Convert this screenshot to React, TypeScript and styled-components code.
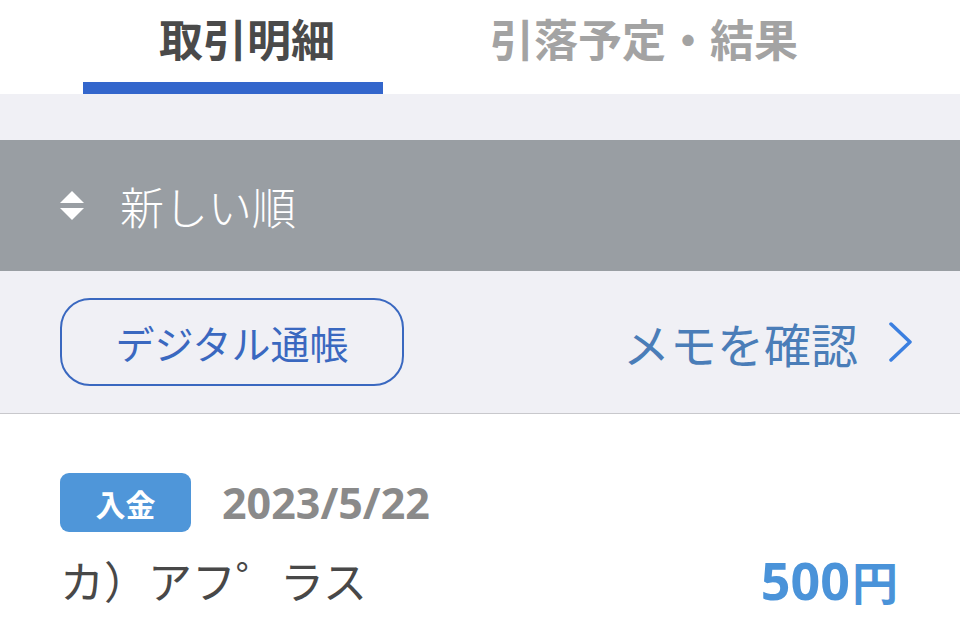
import React from "react";
import styled, { createGlobalStyle } from "styled-components";

const Global = createGlobalStyle`
  html, body { margin: 0; padding: 0; background: #ffffff; }
  body { font-family: "Noto Sans CJK JP", "Noto Sans", sans-serif; }
  * { box-sizing: border-box; }
`;

const Page = styled.div`
  width: 960px;
  height: 619px;
  overflow: hidden;
  background: #ffffff;
  display: flex;
  flex-direction: column;
`;

const TabBar = styled.div`
  height: 94px;
  display: flex;
  padding-left: 83px;
  background: #ffffff;
`;

const Tab = styled.div<{ $active?: boolean }>`
  width: ${(p) => (p.$active ? "300px" : "auto")};
  display: flex;
  align-items: center;
  justify-content: center;
  white-space: nowrap;
  padding-left: ${(p) => (p.$active ? "28px" : "0")};
  padding-bottom: ${(p) => (p.$active ? "6px" : "18px")};
  margin-left: ${(p) => (p.$active ? "0" : "107px")};
  font-size: 44px;
  font-weight: 700;
  color: ${(p) => (p.$active ? "#4a4a4a" : "#a3a3a3")};
  border-bottom: ${(p) => (p.$active ? "12px solid #3366cc" : "none")};
`;

const Spacer = styled.div`
  height: 46px;
  background: #f0f0f5;
`;

const SortBar = styled.div`
  height: 131px;
  background: #999ea3;
  display: flex;
  align-items: center;
  padding-left: 60px;
  gap: 36px;
  color: #ffffff;
  font-size: 44px;
  font-weight: 300;
`;

const ActionRow = styled.div`
  height: 143px;
  background: #f0f0f5;
  border-bottom: 1px solid #c8c8cc;
  display: flex;
  align-items: center;
  justify-content: space-between;
  padding: 0 46px 0 60px;
`;

const OutlineButton = styled.div`
  width: 344px;
  height: 88px;
  border: 2.5px solid #3a68c0;
  border-radius: 30px;
  display: flex;
  align-items: center;
  justify-content: center;
  color: #3a68c0;
  font-size: 39px;
  font-weight: 400;
`;

const MemoLink = styled.div`
  display: flex;
  align-items: center;
  gap: 30px;
  color: #4a7db8;
  font-size: 47px;
  font-weight: 400;
`;

const Entry = styled.div`
  flex: 1;
  background: #ffffff;
  padding: 59px 62px 0 60px;
  display: flex;
  flex-direction: column;
`;

const MetaRow = styled.div`
  display: flex;
  align-items: center;
  gap: 31px;
`;

const Badge = styled.div`
  width: 131px;
  height: 59px;
  border-radius: 9px;
  background: #4f96d9;
  color: #ffffff;
  font-size: 30px;
  font-weight: 700;
  display: flex;
  align-items: center;
  justify-content: center;
`;

const DateText = styled.div`
  color: #8a8a8a;
  font-family: "Noto Sans", "Noto Sans CJK JP", sans-serif;
  font-size: 43px;
  font-weight: 700;
`;

const MainRow = styled.div`
  display: flex;
  align-items: center;
  justify-content: space-between;
  margin-top: 12px;
`;

const Payee = styled.div`
  color: #484848;
  font-size: 44px;
  font-weight: 400;
`;

const Amount = styled.div`
  color: #4a93d9;
  font-family: "Noto Sans", "Noto Sans CJK JP", sans-serif;
  font-size: 52px;
  font-weight: 700;
  display: flex;
  align-items: baseline;
`;

const Yen = styled.span`
  font-family: "Noto Sans CJK JP", sans-serif;
  font-size: 46px;
  font-weight: 700;
  margin-left: 2px;
`;

const SortIcon = () => (
  <svg width="24" height="30" viewBox="0 0 24 30">
    <polygon points="12,0 24,12 0,12" fill="#ffffff" />
    <polygon points="0,17 24,17 12,29" fill="#ffffff" />
  </svg>
);

const Chevron = () => (
  <svg width="26" height="40" viewBox="0 0 26 40">
    <polyline
      points="3,2 22,20 3,38"
      fill="none"
      stroke="#3b7fe0"
      strokeWidth="3.5"
      strokeLinecap="round"
      strokeLinejoin="round"
    />
  </svg>
);

export default function App() {
  return (
    <>
      <Global />
      <Page>
        <TabBar>
          <Tab $active>取引明細</Tab>
          <Tab>引落予定・結果</Tab>
        </TabBar>
        <Spacer />
        <SortBar>
          <SortIcon />
          <span>新しい順</span>
        </SortBar>
        <ActionRow>
          <OutlineButton>デジタル通帳</OutlineButton>
          <MemoLink>
            <span>メモを確認</span>
            <Chevron />
          </MemoLink>
        </ActionRow>
        <Entry>
          <MetaRow>
            <Badge>入金</Badge>
            <DateText>2023/5/22</DateText>
          </MetaRow>
          <MainRow>
            <Payee>カ）アフ゜ラス</Payee>
            <Amount>
              500<Yen>円</Yen>
            </Amount>
          </MainRow>
        </Entry>
      </Page>
    </>
  );
}
